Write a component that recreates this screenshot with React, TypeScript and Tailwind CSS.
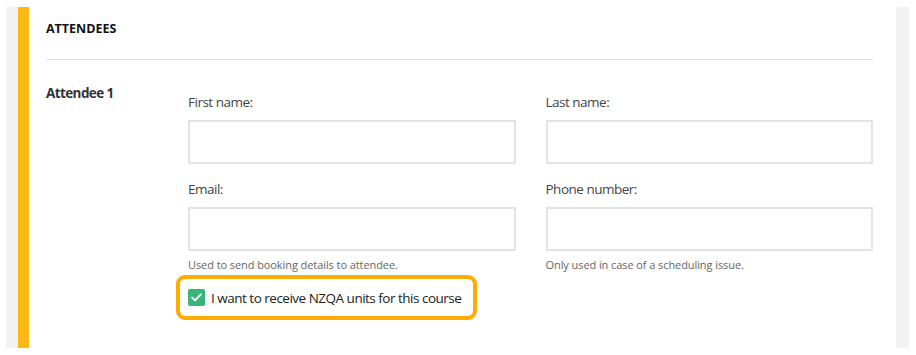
import type { ReactNode } from 'react'

function Field({ label, help }: { label: string; help?: string }) {
  return (
    <div className="flex flex-col">
      <label className="text-[13.5px] leading-[18px] tracking-[-0.5px] text-[#444]">{label}</label>
      <input
        type="text"
        className="mt-[9px] h-[44px] w-full border-2 border-[#e3e3e3] bg-white outline-none"
      />
      {help && (
        <p className="mt-[7px] text-[11px] leading-[14px] tracking-[-0.08px] text-[#666]">{help}</p>
      )}
    </div>
  )
}

function Highlight({ children }: { children: ReactNode }) {
  return (
    <div className="-ml-[12px] mt-[3px] inline-flex h-[45px] items-center gap-[6px] self-start rounded-[9px] border-[4px] border-[#ffab00] pl-[8px] pr-[12px]">
      {children}
    </div>
  )
}

export default function App() {
  return (
    <div
      className="h-[355px] w-[916px] bg-white px-[6px] pb-[7px] pt-[7px] pr-[7px]"
      style={{ fontFamily: '"Open Sans", "Noto Sans", sans-serif' }}
    >
      <div className="flex h-full bg-[#f2f2f2] px-[12px] pr-[13px]">
        <div className="flex-1 border-l-[11px] border-[#fdb913] bg-white pl-[17px] pr-[23px]">
          <div className="border-b border-[#e2e2e2] pb-[22px] pt-[14px]">
            <h2 className="text-[12.5px] font-bold uppercase leading-[16px] text-[#111]">
              Attendees
            </h2>
          </div>

          <div className="grid grid-cols-[142px_1fr] pt-[24px]">
            <h3 className="text-[13.5px] font-bold leading-[18px] tracking-[-0.6px] text-[#333]">
              Attendee 1
            </h3>
            <div className="flex flex-col pt-[9px]">
              <div className="grid grid-cols-2 gap-x-[30px] gap-y-[16px]">
                <Field label="First name:" />
                <Field label="Last name:" />
                <Field label="Email:" help="Used to send booking details to attendee." />
                <Field label="Phone number:" help="Only used in case of a scheduling issue." />
              </div>
              <Highlight>
                <span className="flex h-[17px] w-[17px] items-center justify-center rounded-[2px] bg-[#38b47a]">
                  <svg width="11" height="9" viewBox="0 0 11 9" fill="none">
                    <path d="M1.2 4.6 4.1 7.4 9.8 1.4" stroke="white" strokeWidth="2" strokeLinecap="round" strokeLinejoin="round" />
                  </svg>
                </span>
                <span className="text-[13.5px] leading-[18px] tracking-[-0.5px] text-[#222]">
                  I want to receive NZQA units for this course
                </span>
              </Highlight>
            </div>
          </div>
        </div>
      </div>
    </div>
  )
}
